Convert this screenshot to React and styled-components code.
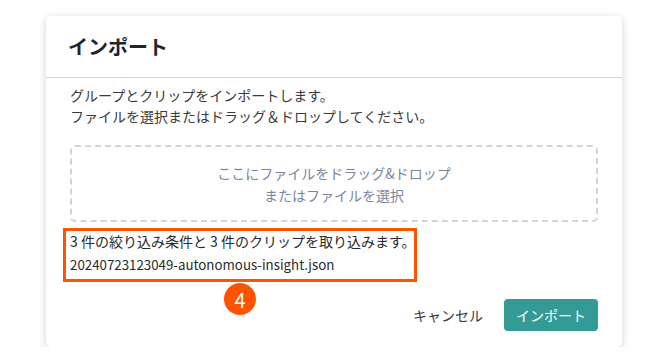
import React from 'react';
import styled, { createGlobalStyle } from 'styled-components';

const GlobalStyle = createGlobalStyle`
  body {
    margin: 0;
    background: #fff;
    font-family: "Noto Sans CJK JP", "Noto Sans", sans-serif;
  }
`

const Page = styled.div`
  padding: 16px 0 0 46px;
`

const Dialog = styled.div`
  width: 576px;
  height: 331px;
  box-sizing: border-box;
  background: #fff;
  border-radius: 5px;
  box-shadow: 0 2px 8px rgba(0, 0, 0, 0.18);
  display: flex;
  flex-direction: column;
`

const Header = styled.div`
  height: 62px;
  box-sizing: border-box;
  border-bottom: 1px solid #cbd5e1;
  display: flex;
  align-items: center;
  padding: 0 22px;
`

const Title = styled.h2`
  margin: 0;
  font-size: 20px;
  font-weight: 700;
  color: #1e2530;
`

const Body = styled.div`
  padding: 7px 24px 0 24px;
  flex: 1;
`

const Lead = styled.p`
  margin: 0;
  font-size: 14px;
  line-height: 21px;
  color: #3a3a3a;
`

const DropZone = styled.div`
  margin-top: 18px;
  height: 77px;
  box-sizing: border-box;
  border: 2px dashed #cbd5e1;
  border-radius: 5px;
  display: flex;
  align-items: center;
  justify-content: center;
  text-align: center;
  font-size: 14px;
  line-height: 22px;
  color: #7a869c;
`

const Result = styled.div`
  position: relative;
  margin-top: 8px;
  font-size: 14px;
  line-height: 23px;
  color: #2a2a2a;
`

const FileName = styled.div`
  font-size: 13.3px;
`

const Highlight = styled.div`
  position: absolute;
  left: -7px;
  top: -2px;
  width: 354px;
  height: 54px;
  box-sizing: border-box;
  border: 3px solid #ff5300;
`

const Badge = styled.div`
  position: absolute;
  left: 154px;
  top: 53px;
  width: 32px;
  height: 32px;
  border-radius: 50%;
  background: #ff5300;
  color: #fff;
  font-size: 20px;
  font-weight: 400;
  display: flex;
  align-items: center;
  justify-content: center;
`

const Footer = styled.div`
  display: flex;
  justify-content: flex-end;
  align-items: center;
  gap: 9px;
  padding: 0 24px 16px 24px;
`

const Button = styled.button`
  height: 32px;
  padding: 0 12px;
  border: none;
  border-radius: 4px;
  font-family: inherit;
  font-size: 14px;
  cursor: pointer;
  background: ${p => p.primary ? '#339a96' : 'transparent'};
  color: ${p => p.primary ? '#fff' : '#3a3a3a'};
`

export default function App() {
  return (
    <Page>
      <GlobalStyle />
      <Dialog>
        <Header>
          <Title>インポート</Title>
        </Header>
        <Body>
          <Lead>
            グループとクリップをインポートします。<br />
            ファイルを選択またはドラッグ＆ドロップしてください。
          </Lead>
          <DropZone>
            ここにファイルをドラッグ&ドロップ<br />
            またはファイルを選択
          </DropZone>
          <Result>
            <div>3 件の絞り込み条件と 3 件のクリップを取り込みます。</div>
            <FileName>20240723123049-autonomous-insight.json</FileName>
            <Highlight />
            <Badge>4</Badge>
          </Result>
        </Body>
        <Footer>
          <Button>キャンセル</Button>
          <Button primary>インポート</Button>
        </Footer>
      </Dialog>
    </Page>
  );
}
